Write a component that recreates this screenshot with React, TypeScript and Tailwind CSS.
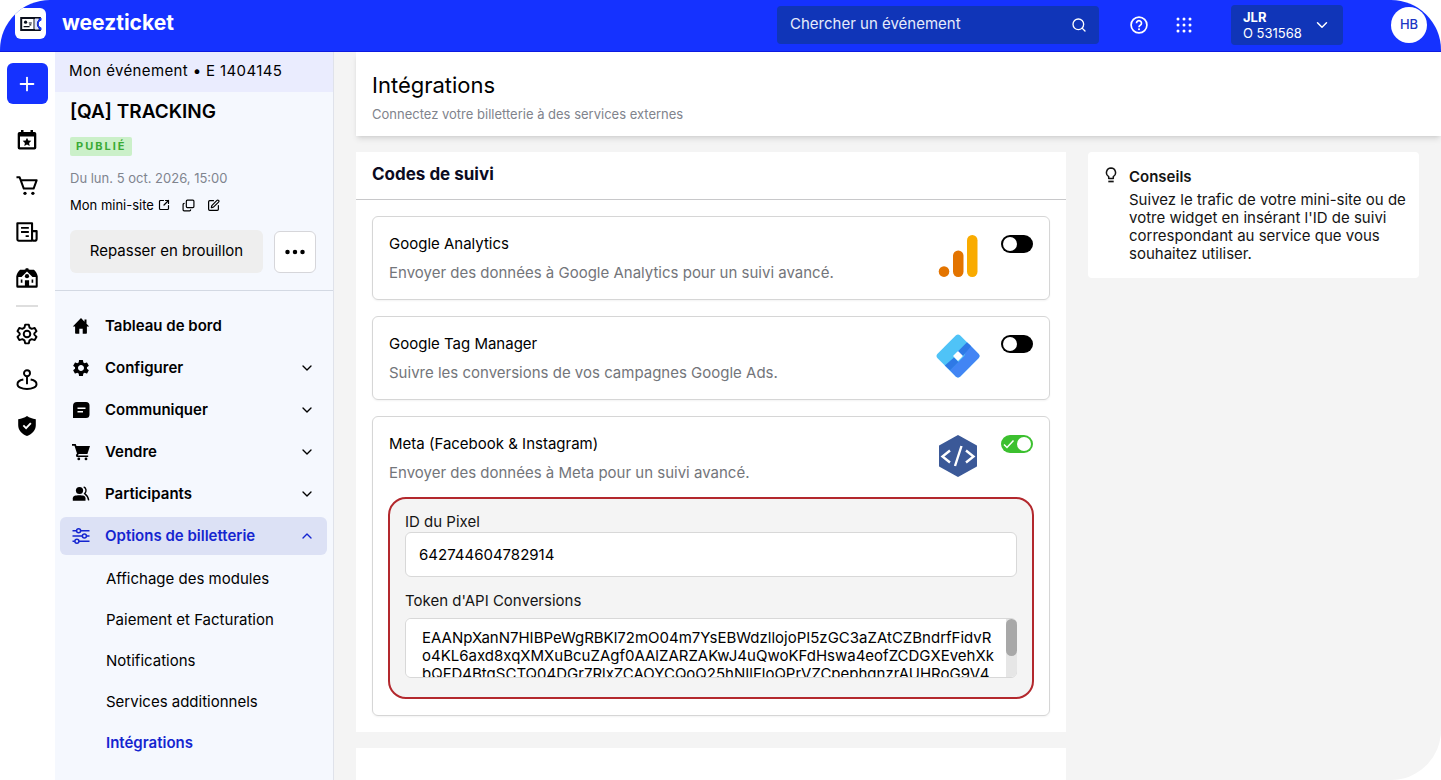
import { useState } from "react";
import type { ReactNode } from "react";
import clsx from "clsx";
import { BsThreeDots } from "react-icons/bs";
import { MdSettings } from "react-icons/md";
import { FiChevronDown, FiChevronUp } from "react-icons/fi";
import { Copy, Plus, Search, SquareArrowOutUpRight, SquarePen } from "lucide-react";

type IconProps = { className?: string };

/* ── Icons ─────────────────────────────────────────── */

function TicketLogo({ className }: IconProps) {
  return (
    <svg viewBox="0 0 22 16" className={className} fill="none">
      <path d="M1.200 2h18.600v1.800c-3 1-3 7.400 0 8.400V14H1.200z" fill="#fff" stroke="#0b0f1c" strokeWidth="2" />
      <path d="M14 3v10" stroke="#0b0f1c" strokeWidth="1" />
      <path d="M15 2.600h3.800l-.6 2c-2 2-2 4.800 0 6.800l.6 2H15z" fill="#dbe3ff" />
      <path d="M21.500 2v2.200c-4 1.300-4 6.300 0 7.600V14h-2.200v-1.600c-3-1.800-3-7 0-8.800V2z" fill="#1532ff" />
      <circle cx="5.600" cy="6.200" r="1.600" fill="#0b0f1c" />
      <path d="M3.600 10.600h6M8.800 7h3M9.300 8.900h2" stroke="#0b0f1c" strokeWidth="1.100" />
    </svg>
  );
}

function CalendarStar({ className }: IconProps) {
  return (
    <svg viewBox="0 0 22 22" className={className}>
      <path d="M5 1h2.500v2h7V1H17v2h1.500A1.800 1.800 0 0 1 20.300 4.800v14a1.800 1.800 0 0 1-1.800 1.800h-15a1.800 1.800 0 0 1-1.800-1.800v-14A1.800 1.800 0 0 1 3.500 3H5zM4 7.500v10.800h14V7.500z" fill="currentColor" fillRule="evenodd" />
      <path d="m11 8.700 1.300 2.800 3 .3-2.200 2.100.6 3-2.700-1.500-2.700 1.500.6-3-2.200-2.100 3-.3z" fill="currentColor" />
    </svg>
  );
}

function CartLine({ className }: IconProps) {
  return (
    <svg viewBox="0 0 24 24" className={className} fill="none" stroke="currentColor" strokeWidth="2.200">
      <path d="M.5 2.500h3.500l4.500 12.300h10.700l3.300-9H5.500" strokeLinejoin="round" />
      <circle cx="9.800" cy="20" r="1.800" fill="currentColor" stroke="none" />
      <circle cx="18.400" cy="20" r="1.800" fill="currentColor" stroke="none" />
    </svg>
  );
}

function News({ className }: IconProps) {
  return (
    <svg viewBox="0 0 24 22" className={className} fill="none" stroke="currentColor" strokeWidth="2.300">
      <path d="M17.500 20.500H3A1.500 1.500 0 0 1 1.500 19V1.500h16v17c0 1.300.9 2 2.300 2s2.700-.8 2.700-2V10h-5" strokeLinejoin="round" />
      <path d="M5.500 6.500H14M5.500 11H14M10.500 15.500H14" strokeWidth="2" />
    </svg>
  );
}

function Venue({ className }: IconProps) {
  return (
    <svg viewBox="0 0 24 22" className={className}>
      <path d="M9 2 10.500 1.500V.3h3v1.200L15 2h4.500C21.500 3.800 23 6.200 23.700 9v11a1.700 1.700 0 0 1-1.700 1.700H2A1.700 1.700 0 0 1 .3 20V9C1 6.200 2.500 3.800 4.500 2z" fill="currentColor" />
      <path d="M12 3.800 6 9.800H2.500v9.500h19V9.800H18z" fill="#fff" />
      <circle cx="12" cy="9" r="2.300" fill="currentColor" />
      <path d="M9.700 20v-6.500h4.600V20zM5.200 12.500H7v3.600H5.200zM17 12.500h1.800v3.600H17z" fill="currentColor" />
    </svg>
  );
}

function GearLine({ className }: IconProps) {
  return (
    <svg viewBox="0 0 24 24" className={className} fill="none" stroke="currentColor" strokeWidth="2.100" strokeLinejoin="round">
      <path d="M10 1.800h4l.8 3.300 2.300 1.300 3.300-1 2 3.500L20 11.300v1.400l2.400 2.400-2 3.500-3.300-1-2.300 1.300-.8 3.300h-4l-.8-3.300-2.300-1.300-3.300 1-2-3.500L4 12.700v-1.400L1.600 8.900l2-3.500 3.300 1 2.300-1.300z" />
      <circle cx="12" cy="12" r="3.600" />
    </svg>
  );
}

function PinDisc({ className }: IconProps) {
  return (
    <svg viewBox="0 0 24 24" className={className} fill="none" stroke="currentColor" strokeWidth="2.100">
      <circle cx="12" cy="4.600" r="3.300" />
      <path d="M12 7.700v9" />
      <path d="M8 11.500c-3.600.7-6.400 2.500-6.400 5 0 3.200 4.600 5.300 10.400 5.300s10.400-2.100 10.400-5.300c0-2.500-2.800-4.300-6.400-5" />
    </svg>
  );
}

function ShieldCheck({ className }: IconProps) {
  return (
    <svg viewBox="0 0 22 24" className={className}>
      <path d="M11 1.200c2.800 2 5.800 3 9.600 3.400v6.700c0 5.400-3.900 9.600-9.600 11.700C5.300 20.900 1.400 16.700 1.400 11.300V4.600C5.200 4.200 8.200 3.200 11 1.200z" fill="currentColor" />
      <path d="m7 11.300 3 3 5.200-5.500" fill="none" stroke="#fff" strokeWidth="2" />
    </svg>
  );
}

function HomeSolid({ className }: IconProps) {
  return (
    <svg viewBox="0 0 18 18" className={className} fill="currentColor">
      <path d="M9 1 .8 9.600h2.300V16a.8.8 0 0 0 .8.800h3.400v-5.100h3.400v5.100h3.400a.8.8 0 0 0 .8-.8V9.600h2.300L14.500 6.800V2.500h-2v2.200z" />
    </svg>
  );
}

function ChatSolid({ className }: IconProps) {
  return (
    <svg viewBox="0 0 18 18" className={className}>
      <path d="M5 1h9a3.500 3.500 0 0 1 3.500 3.500v9A3.500 3.500 0 0 1 14 17H1V5a4 4 0 0 1 4-4z" fill="currentColor" />
      <path d="M5.500 7.200h8M5.500 10.800H11" stroke="#fff" strokeWidth="1.600" />
    </svg>
  );
}

function CartSolid({ className }: IconProps) {
  return (
    <svg viewBox="0 0 20 18" className={className} fill="currentColor">
      <path d="M1 1h3.700l.8 2H19l-2.600 8H7.700l-.9 1.500h10.400V14H5.500L4.900 12 6 10.500 3.500 2.800H1z" />
      <circle cx="7.800" cy="15.900" r="1.400" />
      <circle cx="15" cy="15.900" r="1.400" />
    </svg>
  );
}

function People({ className }: IconProps) {
  return (
    <svg viewBox="0 0 18 16" className={className} fill="currentColor">
      <circle cx="7.500" cy="4.500" r="3.600" />
      <path d="M.8 14.800v-2.500C.8 9.800 3.500 9.200 7.300 9.200s6.200.6 6.200 3.100v2.500z" />
      <path d="M11.700 1c2.800.8 3 4.600 1 6.600 2 1.400 3.500 3.500 4 6.700" fill="none" stroke="currentColor" strokeWidth="1.400" />
    </svg>
  );
}

function Sliders({ className }: IconProps) {
  return (
    <svg viewBox="0 0 18 16" className={className} fill="none" stroke="currentColor" strokeWidth="1.500">
      <path d="M.5 2.700h4M8.700 2.700h8.800M.5 8h9.800M14.500 8h3M.5 13.300h2.300M7 13.300h10.500" />
      <circle cx="6.600" cy="2.700" r="2" />
      <circle cx="12.400" cy="8" r="2" />
      <circle cx="4.900" cy="13.300" r="2" />
    </svg>
  );
}

function Help({ className }: IconProps) {
  return (
    <svg viewBox="0 0 18 18" className={className} fill="none" stroke="currentColor" strokeWidth="1.700">
      <circle cx="9" cy="9" r="7.900" />
      <path d="M6.500 7.200a2.500 2.500 0 1 1 3.800 2.100c-.8.500-1.300.9-1.300 2" />
      <circle cx="9" cy="13.200" r="1" fill="currentColor" stroke="none" />
    </svg>
  );
}

function Apps({ className }: IconProps) {
  return (
    <svg viewBox="0 0 16 16" className={className} fill="currentColor">
      {[2, 8, 14].map((y) => [2, 8, 14].map((x) => <circle key={`${x}-${y}`} cx={x} cy={y} r="1.500" />))}
    </svg>
  );
}

function Bulb({ className }: IconProps) {
  return (
    <svg viewBox="0 0 12 16" className={className} fill="none" stroke="currentColor" strokeWidth="1.500">
      <path d="M3.700 11.500V9.700A4.700 4.700 0 0 1 6 1a4.700 4.700 0 0 1 2.300 8.700v1.800z" strokeLinejoin="round" />
      <path d="M3.300 14.500h5.400" strokeWidth="1.700" />
    </svg>
  );
}

function AnalyticsLogo() {
  return (
    <svg viewBox="0 0 44 44" className="size-11">
      <rect x="31" y="1" width="10.500" height="42" rx="5.200" fill="#f9ab00" />
      <rect x="17" y="16.500" width="10.500" height="26.500" rx="5.200" fill="#e37400" />
      <circle cx="8" cy="37.600" r="5.300" fill="#e37400" />
    </svg>
  );
}

function TagManagerLogo() {
  return (
    <svg viewBox="0 0 44 44" className="size-11">
      <path d="M20 1.300q2-1.600 4 0l18.700 18.700q1.600 2 0 4L24 42.700q-2 1.600-4 0L1.300 24q-1.600-2 0-4z" fill="#4fc3f7" />
      <path d="m32.500 9.500 10.200 10.500q1.600 2 0 4L24 42.700q-2 1.600-4 0L14 36.500 28.300 22z" fill="#4285f4" />
      <path d="M31 8.300 21.500 17.800l5 4.700 8.500-10.200zM14 36.500 22.500 28l-4.500-4.500L8.800 31.500z" fill="#2e79e6" />
      <path d="m22 18 4 4-4 4-4-4z" fill="#fff" stroke="#fff" strokeWidth="1.500" strokeLinejoin="round" />
    </svg>
  );
}

function PixelLogo() {
  return (
    <svg viewBox="0 0 44 44" className="size-11">
      <path d="M22 2 40 12v20L22 42 4 32V12z" fill="#3b5998" stroke="#3b5998" strokeWidth="2" strokeLinejoin="round" />
      <path d="m14 16.500-7.500 6 7.500 6M30 16.500l7.500 6-7.500 6M25.500 12l-6.500 20" fill="none" stroke="#fff" strokeWidth="2.400" />
    </svg>
  );
}

/* ── Data ──────────────────────────────────────────── */

const railTop = [
  { label: "Événements", icon: CalendarStar },
  { label: "Ventes", icon: CartLine },
  { label: "Actualités", icon: News },
  { label: "Lieux", icon: Venue },
];

const railBottom = [
  { label: "Paramètres", icon: GearLine },
  { label: "Localisation", icon: PinDisc },
  { label: "Sécurité", icon: ShieldCheck },
];

const nav = [
  { label: "Configurer", icon: MdSettings, size: "size-5" },
  { label: "Communiquer", icon: ChatSolid, size: "size-[18px]" },
  { label: "Vendre", icon: CartSolid, size: "size-5" },
  { label: "Participants", icon: People, size: "size-[18px]" },
];

const subNav = ["Affichage des modules", "Paiement et Facturation", "Notifications", "Services additionnels", "Intégrations"];

const tokenValue = [
  "EAANpXanN7HIBPeWgRBKl72mO04m7YsEBWdzllojoPI5zGC3aZAtCZBndrfFidvR",
  "o4KL6axd8xqXMXuBcuZAgf0AAlZARZAKwJ4uQwoKFdHswa4eofZCDGXEvehXk",
  "bQFD4BtgSCTQ04DGr7RlxZCAOYCQoQ25hNIlFloQPrVZCpephgnzrAUHRoG9V4",
].join("\n");

/* ── Parts ─────────────────────────────────────────── */

function Topbar() {
  return (
    <header className="flex h-[52px] shrink-0 items-center border-b border-[#0d1ae0] bg-[#1532ff] pr-3.5 pl-[15px] text-white">
      <a href="#" className="flex items-center gap-4 pb-1">
        <span className="flex size-[31px] items-center justify-center rounded-md bg-white">
          <TicketLogo className="h-4 w-[22px]" />
        </span>
        <span className="pb-0.5 text-[21px] leading-7 font-bold">weezticket</span>
      </a>
      <div className="ml-auto flex items-center pb-0.5">
        <label className="flex h-[38px] w-[322px] items-center rounded-sm bg-[#1035b8] pr-3 pl-[13px]">
          <input
            type="search"
            aria-label="Chercher un événement"
            placeholder="Chercher un événement"
            className="min-w-0 flex-1 bg-transparent text-[15px] outline-none placeholder:text-[#e6ebfb]"
          />
          <Search className="size-4" strokeWidth={2} />
        </label>
        <button type="button" aria-label="Aide" className="ml-[31px]">
          <Help className="size-[18px]" />
        </button>
        <button type="button" aria-label="Applications" className="ml-7">
          <Apps className="size-4" />
        </button>
        <button type="button" className="ml-[39px] flex h-10 w-28 items-center justify-between rounded-sm bg-[#1035b8] pr-3 pl-3 text-left text-[13px] leading-4">
          <span>
            <span className="block font-bold">JLR</span>
            <span className="block">O 531568</span>
          </span>
          <FiChevronDown className="size-[18px]" />
        </button>
        <button type="button" className="ml-12 size-9 rounded-full bg-white text-[13px] font-medium text-[#1d36c4]">
          HB
        </button>
      </div>
    </header>
  );
}

function Rail() {
  return (
    <nav aria-label="Principal" className="flex w-[54px] shrink-0 flex-col items-center bg-white pt-[11px] text-black">
      <button type="button" aria-label="Créer" className="flex size-[41px] items-center justify-center rounded-md bg-[#1532ff] text-white">
        <Plus className="size-[22px]" strokeWidth={2} />
      </button>
      <div className="mt-[25px] flex flex-col gap-6">
        {railTop.map(({ label, icon: Icon }) => (
          <a key={label} href="#" aria-label={label}>
            <Icon className="size-[22px]" />
          </a>
        ))}
      </div>
      <hr className="mt-4 w-[22px] border-t-2 border-[#dedede]" />
      <div className="mt-4 flex flex-col gap-6">
        {railBottom.map(({ label, icon: Icon }) => (
          <a key={label} href="#" aria-label={label}>
            <Icon className="size-[22px]" />
          </a>
        ))}
      </div>
    </nav>
  );
}

function NavLabel({ icon, children }: { icon: ReactNode; children: ReactNode }) {
  return (
    <>
      <span className="flex w-5 justify-center">{icon}</span>
      <span className="flex-1 text-left">{children}</span>
    </>
  );
}

const navRow = "flex h-[38px] w-full items-center gap-3.5 rounded-md pr-3 pl-[11px]";

function Sidebar() {
  return (
    <aside className="w-[280px] shrink-0 border-r border-l border-r-[#dfe2ea] border-l-white bg-[#f5f8fe] text-[15px] text-black">
      <div className="flex h-10 items-center bg-[#eaecfe] px-3.5 pb-0.5 tracking-wide">Mon événement • E 1404145</div>

      <div className="border-b border-[#d3d9e3] px-[15px] pt-[6px] pb-[17px]">
        <h2 className="text-[19px] leading-7 font-semibold">[QA] TRACKING</h2>
        <span className="mt-[11px] flex h-[19px] w-fit items-center rounded-xs bg-[#cbf0c9] px-1.5 text-[11px] font-bold tracking-[2px] text-[#3aaa35]">
          PUBLIÉ
        </span>
        <p className="mt-3 text-[13px] leading-5 text-[#7f848e]">Du lun. 5 oct. 2026, 15:00</p>
        <div className="mt-[7px] flex items-center gap-3 text-[13px] leading-5">
          <a href="#" className="flex items-center gap-1">
            Mon mini-site
            <SquareArrowOutUpRight className="size-3" strokeWidth={2.4} />
          </a>
          <button type="button" aria-label="Copier le lien">
            <Copy className="size-[13px] -scale-y-100" strokeWidth={2.2} />
          </button>
          <button type="button" aria-label="Modifier">
            <SquarePen className="size-[13px]" strokeWidth={2.2} />
          </button>
        </div>
        <div className="mt-[15px] flex items-center gap-[11px]">
          <button type="button" className="h-[43px] w-[193px] rounded-md bg-[#eeeeee]">
            Repasser en brouillon
          </button>
          <button type="button" aria-label="Plus d'actions" className="flex size-[42px] items-center justify-center rounded-md border border-[#d6d6da] bg-white">
            <BsThreeDots className="size-6" />
          </button>
        </div>
      </div>

      <nav aria-label="Événement" className="pt-4 pr-1.5 pl-[5px] font-semibold">
        <ul className="flex flex-col gap-1">
          <li>
            <a href="#" className={navRow}>
              <NavLabel icon={<HomeSolid className="size-[18px]" />}>Tableau de bord</NavLabel>
            </a>
          </li>
          {nav.map(({ label, icon: Icon, size }) => (
            <li key={label}>
              <button type="button" className={navRow}>
                <NavLabel icon={<Icon className={size} />}>{label}</NavLabel>
                <FiChevronDown className="size-4" />
              </button>
            </li>
          ))}
          <li>
            <button type="button" aria-expanded="true" className={clsx(navRow, "bg-[#dce1f5] text-[#1525d0]")}>
              <NavLabel icon={<Sliders className="size-[18px]" />}>Options de billetterie</NavLabel>
              <FiChevronUp className="size-4" />
            </button>
          </li>
        </ul>
        <ul className="pt-1 pl-[46px]">
          {subNav.map((label) => (
            <li key={label}>
              <a
                href="#"
                className={clsx("flex h-[41px] items-center", label === "Intégrations" ? "text-[#1525d0]" : "font-normal")}
              >
                {label}
              </a>
            </li>
          ))}
        </ul>
      </nav>
    </aside>
  );
}

function Toggle({ label, defaultChecked = false }: { label: string; defaultChecked?: boolean }) {
  const [on, setOn] = useState(defaultChecked);
  return (
    <span className="relative mt-1.5 flex">
      <input
        type="checkbox"
        role="switch"
        aria-label={label}
        checked={on}
        onChange={(e) => setOn(e.target.checked)}
        className="h-[18px] w-8 cursor-pointer appearance-none rounded-full bg-black before:m-0.5 before:block before:size-3.5 before:rounded-full before:bg-white checked:bg-[#3cc02f] checked:before:ml-4"
      />
      {on && (
        <svg viewBox="0 0 12 10" className="pointer-events-none absolute top-1 left-0.5 h-2.5 w-3" fill="none" stroke="#fff" strokeWidth="1.500">
          <path d="m1 5.500 3 3L10.500 1.500" />
        </svg>
      )}
    </span>
  );
}

function Integration({
  title,
  description,
  logo,
  enabled,
  children,
}: {
  title: string;
  description: string;
  logo: ReactNode;
  enabled?: boolean;
  children?: ReactNode;
}) {
  return (
    <section className={clsx("rounded-md border border-[#d6d6d6] px-4 pt-3 shadow-xs", children ? "pb-4" : "pb-3")}>
      <div className="flex items-start">
        <div className="flex-1 text-[15px] leading-[29px]">
          <h3 className="text-black">{title}</h3>
          <p className="text-[#73757a]">{description}</p>
        </div>
        <div className="mt-[5px] mr-[21px]">{logo}</div>
        <Toggle label={title} defaultChecked={enabled} />
      </div>
      {children}
    </section>
  );
}

function TrackingCodes() {
  return (
    <section className="bg-white">
      <h2 className="flex h-12 items-center border-b border-[#c8c8ca] px-4 pb-0.5 text-[17px] font-bold text-[#0b0b1f]">
        Codes de suivi
      </h2>
      <div className="flex flex-col gap-4 p-4">
        <Integration
          title="Google Analytics"
          description="Envoyer des données à Google Analytics pour un suivi avancé."
          logo={<AnalyticsLogo />}
        />
        <Integration
          title="Google Tag Manager"
          description="Suivre les conversions de vos campagnes Google Ads."
          logo={<TagManagerLogo />}
        />
        <Integration
          title="Meta (Facebook & Instagram)"
          description="Envoyer des données à Meta pour un suivi avancé."
          logo={<PixelLogo />}
          enabled
        >
          <div className="-mx-px mt-2.5 flex flex-col rounded-[18px] border-2 border-[#b3282d] bg-[#f4f4f4] px-[15px] pt-[13px] pb-[19px] text-[15px]">
            <label htmlFor="pixel-id" className="leading-5 text-[#141414]">
              ID du Pixel
            </label>
            <input
              id="pixel-id"
              defaultValue="642744604782914"
              className="h-[45px] rounded-md border border-[#d8d8d8] bg-white px-[13px] text-black outline-none"
            />
            <label htmlFor="api-token" className="mt-3.5 leading-5 text-[#141414]">
              Token d'API Conversions
            </label>
            <div className="relative mt-[7px] flex">
              <textarea
                id="api-token"
                defaultValue={tokenValue}
                spellCheck={false}
                className="h-[60px] flex-1 resize-none overflow-x-hidden overflow-y-auto rounded-md border border-[#d8d8d8] bg-white px-4 pt-2.5 pb-7 leading-[18px] whitespace-pre text-black outline-none [scrollbar-width:none]"
              />
              <span className="pointer-events-none absolute inset-y-px right-0 w-[11px] rounded-r-md bg-[#e6e6e6]">
                <span className="block h-[37px] rounded-full bg-[#a8a8a8]" />
              </span>
            </div>
          </div>
        </Integration>
      </div>
    </section>
  );
}

export default function App() {
  return (
    <div className="flex h-screen flex-col overflow-hidden rounded-[50px] bg-white font-['Inter',sans-serif]">
      <Topbar />
      <div className="flex min-h-0 flex-1">
        <Rail />
        <Sidebar />
        <main className="flex min-w-0 flex-1 flex-col gap-4 overflow-hidden bg-[#f4f4f4] pl-[22px]">
          <div className="h-[84px] shrink-0 bg-white px-4 pt-[18px] shadow-md">
            <h1 className="text-[22px] leading-[30px] text-black">Intégrations</h1>
            <p className="mt-1 text-[13px] leading-5 text-[#80838c]">Connectez votre billetterie à des services externes</p>
          </div>

          <div className="flex items-start gap-[22px] pr-[22px]">
            <div className="flex min-w-0 flex-1 flex-col gap-4">
              <TrackingCodes />
              <section className="h-24 bg-white" />
            </div>
            <aside className="flex w-[331px] shrink-0 gap-3 rounded-sm bg-white py-[15px] pr-3 pl-[17px] text-[15px] leading-[18px] text-[#141414]">
              <Bulb className="h-4 w-3 shrink-0" />
              <div>
                <h2 className="mb-1 leading-5 font-semibold">Conseils</h2>
                <p>Suivez le trafic de votre mini-site ou de votre widget en insérant l'ID de suivi correspondant au service que vous souhaitez utiliser.</p>
              </div>
            </aside>
          </div>
        </main>
      </div>
    </div>
  );
}
